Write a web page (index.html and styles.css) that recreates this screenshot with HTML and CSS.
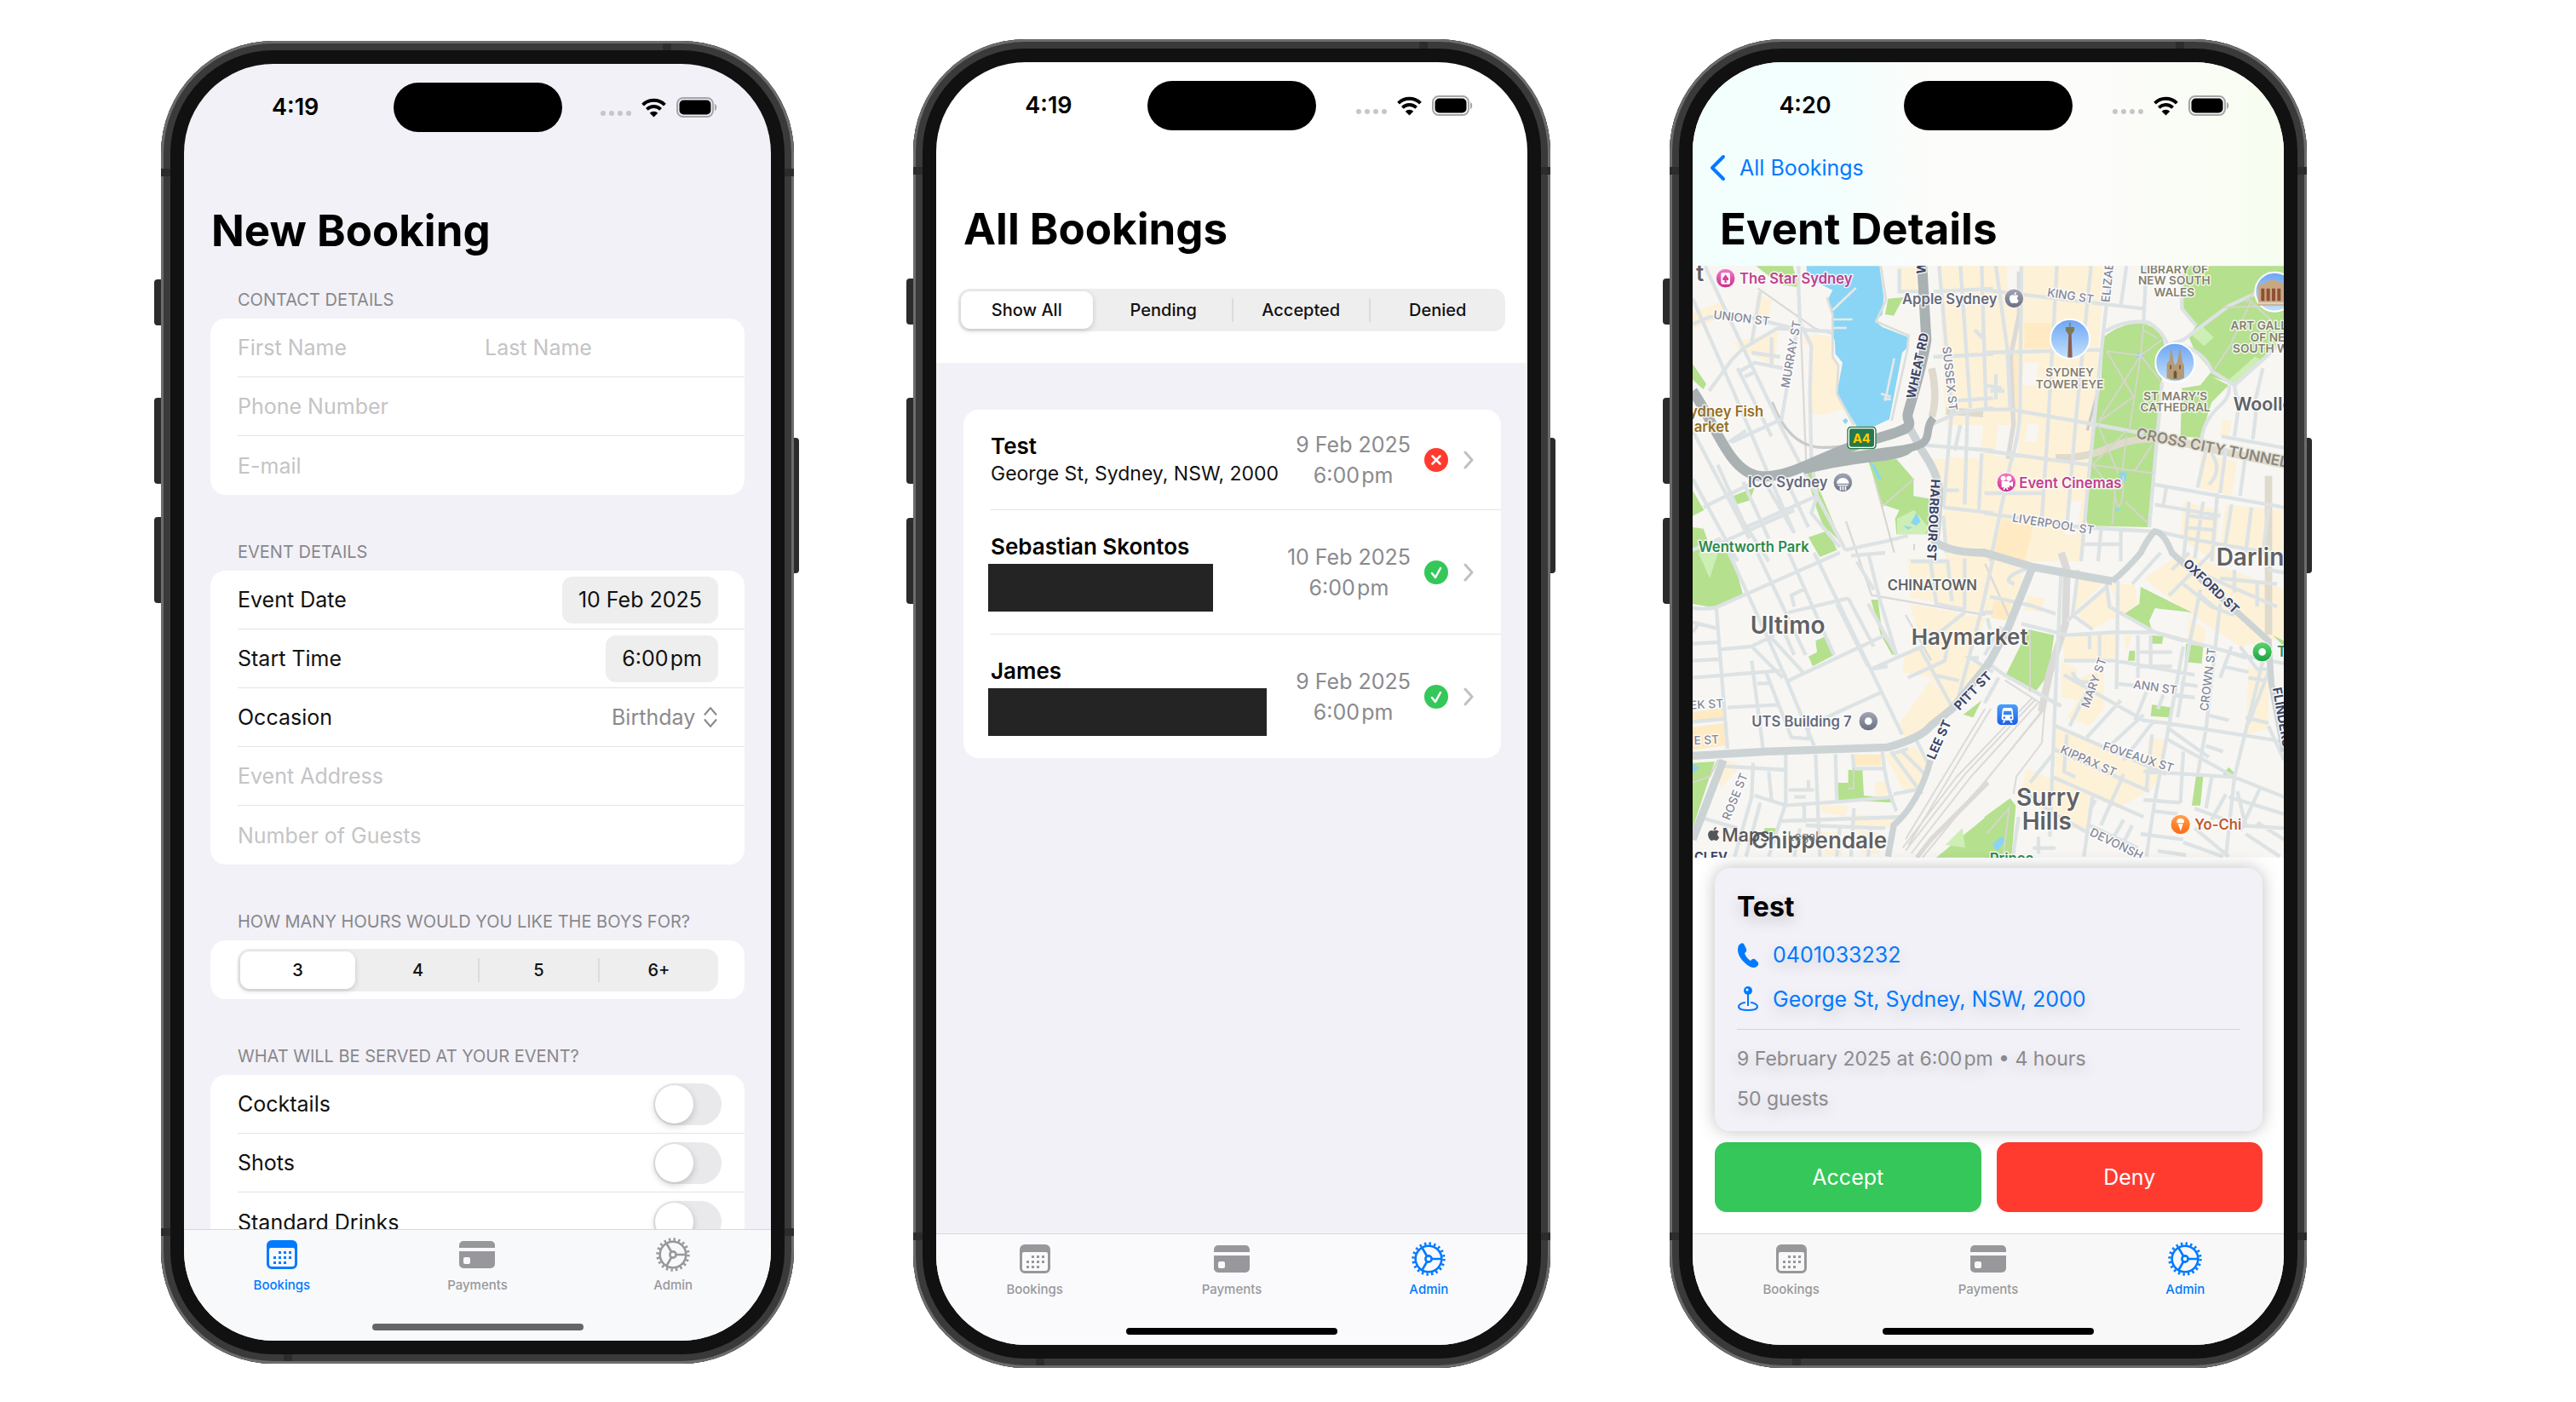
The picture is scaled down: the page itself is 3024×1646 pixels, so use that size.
FILE: index.html
```html
<!DOCTYPE html>
<html lang="en">
<head>
<meta charset="utf-8">
<title>Bookings app</title>
<meta name="viewport" content="width=device-width, initial-scale=1">
<link rel="stylesheet" href="styles.css">
</head>
<body>
<svg class="sprite" aria-hidden="true">
  <symbol id="i-calendar" viewBox="0 0 40 40">
    <path fill="currentColor" fill-rule="evenodd" d="M8 3h24a6 6 0 0 1 6 6v22a6 6 0 0 1-6 6H8a6 6 0 0 1-6-6V9a6 6 0 0 1 6-6zM7 12a2 2 0 0 0-2 2v17a3 3 0 0 0 3 3h24a3 3 0 0 0 3-3V14a2 2 0 0 0-2-2z"/>
    <g fill="currentColor"><path d="M16 16h3v3h-3zM22 16h3v3h-3zM28 16h3v3h-3zM10 22h3v3h-3zM16 22h3v3h-3zM22 22h3v3h-3zM28 22h3v3h-3zM10 28h3v3h-3zM16 28h3v3h-3zM22 28h3v3h-3z"/></g>
  </symbol>
  <symbol id="i-card" viewBox="0 0 44 40">
    <path fill="currentColor" d="M1 12V9a5 5 0 0 1 5-5h32a5 5 0 0 1 5 5v3z"/>
    <path fill="currentColor" fill-rule="evenodd" d="M1 16h42v15a5 5 0 0 1-5 5H6a5 5 0 0 1-5-5zM8 23a2 2 0 0 0-2 2v4a2 2 0 0 0 2 2h4a2 2 0 0 0 2-2v-4a2 2 0 0 0-2-2z"/>
  </symbol>
  <symbol id="i-gear" viewBox="0 0 40 40">
    <g fill="none" stroke="currentColor" stroke-width="2.6">
      <circle cx="20" cy="20" r="15.3"/>
      <circle cx="20" cy="20" r="18" stroke-width="3.4" stroke-dasharray="2.4 3.255"/>
      <circle cx="20" cy="20" r="3.6"/>
      <path d="M24 20h11M18 16.500l-5.500-9.500M18 23.500l-5.500 9.500"/>
    </g>
  </symbol>
  <symbol id="i-wifi" viewBox="0 0 32 24">
    <g fill="none" stroke="#000" stroke-width="4"><path d="M2.500 8.500a19 19 0 0 1 27 0M7.500 14a12 12 0 0 1 17 0"/></g>
    <path d="M16 23.500l-5-5a7 7 0 0 1 10 0z"/>
  </symbol>
  <symbol id="i-battery" viewBox="0 0 48 24">
    <rect x="1" y="1" width="42" height="22" rx="7" fill="none" stroke="#a5a5aa" stroke-width="2"/>
    <rect x="3.500" y="3.500" width="37" height="17" rx="5"/>
    <path d="M45 8c3 1 3 7 0 8z" fill="#a5a5aa"/>
  </symbol>
  <symbol id="i-chevron" viewBox="0 0 12 22"><path d="M2 2l8 9-8 9" fill="none" stroke="#c0c0c4" stroke-width="3" stroke-linecap="round" stroke-linejoin="round"/></symbol>
  <symbol id="i-yes" viewBox="0 0 28 28"><circle cx="14" cy="14" r="14" fill="#35c759"/><path d="M9 15l4 5 6-11" fill="none" stroke="#fff" stroke-width="2.500" stroke-linecap="round" stroke-linejoin="round"/></symbol>
  <symbol id="i-no" viewBox="0 0 28 28"><circle cx="14" cy="14" r="14" fill="#ff3b30"/><path d="M9.500 9.500l9 9M18.500 9.500l-9 9" fill="none" stroke="#fff" stroke-width="2.500" stroke-linecap="round"/></symbol>
  <symbol id="i-apple" viewBox="0 0 24 24"><path fill="currentColor" d="M12.152 6.896c-.948 0-2.415-1.078-3.96-1.04-2.04.027-3.91 1.183-4.961 3.014-2.117 3.675-.546 9.103 1.519 12.09 1.013 1.454 2.208 3.09 3.792 3.039 1.52-.065 2.09-.987 3.935-.987 1.831 0 2.35.987 3.96.948 1.637-.026 2.676-1.48 3.676-2.948 1.156-1.688 1.636-3.325 1.662-3.415-.039-.013-3.182-1.221-3.22-4.857-.026-3.04 2.48-4.494 2.597-4.559-1.429-2.09-3.623-2.324-4.39-2.376-2-.156-3.675 1.09-4.61 1.09zM15.53 3.83c.843-1.012 1.4-2.427 1.245-3.83-1.207.052-2.662.805-3.532 1.818-.78.896-1.454 2.338-1.273 3.714 1.338.104 2.715-.688 3.559-1.701"/></symbol>
</svg>

<main class="showcase">

  <section class="phone phone-first" aria-label="New booking">
    <span class="key key-action"></span><span class="key key-up"></span><span class="key key-down"></span><span class="key key-side"></span>
    <span class="seam seam-top"></span><span class="seam seam-bottom"></span><span class="seam seam-upper"></span><span class="seam seam-lower"></span>
    <div class="screen screen-grey">
      <header class="head">
        <div class="status"><span class="time">4:19</span><span class="island"></span><span class="signals"><span class="dots"><i></i><i></i><i></i><i></i></span><svg class="wifi"><use href="#i-wifi"/></svg><svg class="battery"><use href="#i-battery"/></svg></span></div>
        <div class="nav"></div>
        <h1>New Booking</h1>
      </header>
      <form class="form">
        <h2 class="group-title">CONTACT DETAILS</h2>
        <div class="group">
          <div class="row"><input type="text" placeholder="First Name" aria-label="First Name"><input type="text" placeholder="Last Name" aria-label="Last Name"></div>
          <div class="row"><input type="tel" placeholder="Phone Number" aria-label="Phone Number"></div>
          <div class="row"><input type="email" placeholder="E-mail" aria-label="E-mail"></div>
        </div>
        <h2 class="group-title">EVENT DETAILS</h2>
        <div class="group">
          <div class="row"><span>Event Date</span><button type="button" class="pill">10 Feb 2025</button></div>
          <div class="row"><span>Start Time</span><button type="button" class="pill">6:00&#8202;pm</button></div>
          <div class="row"><label for="occasion">Occasion</label><span class="picker"><select id="occasion"><option>Birthday</option></select><svg class="updown" viewBox="0 0 16 24"><path d="M2 9l6-7 6 7M2 15l6 7 6-7" fill="none" stroke="#8a8a8e" stroke-width="2" stroke-linecap="round" stroke-linejoin="round"/></svg></span></div>
          <div class="row"><input type="text" placeholder="Event Address" aria-label="Event Address"></div>
          <div class="row"><input type="text" placeholder="Number of Guests" aria-label="Number of Guests"></div>
        </div>
        <h2 class="group-title">HOW MANY HOURS WOULD YOU LIKE THE BOYS FOR?</h2>
        <div class="group">
          <div class="row"><div class="segments">
            <label><input type="radio" name="hours" checked><span>3</span></label>
            <label><input type="radio" name="hours"><span>4</span></label>
            <label><input type="radio" name="hours"><span>5</span></label>
            <label><input type="radio" name="hours"><span>6+</span></label>
          </div></div>
        </div>
        <h2 class="group-title">WHAT WILL BE SERVED AT YOUR EVENT?</h2>
        <div class="group">
          <div class="row row-toggle"><label for="cocktails">Cocktails</label><input class="toggle" type="checkbox" id="cocktails"></div>
          <div class="row row-toggle"><label for="shots">Shots</label><input class="toggle" type="checkbox" id="shots"></div>
          <div class="row row-toggle"><label for="standard">Standard Drinks</label><input class="toggle" type="checkbox" id="standard"></div>
        </div>
      </form>
      <footer class="tabbar tabbar-tinted">
        <nav class="tabs">
          <a class="on" href="#bookings"><svg class="icon"><use href="#i-calendar"/></svg>Bookings</a>
          <a href="#payments"><svg class="icon icon-wide"><use href="#i-card"/></svg>Payments</a>
          <a href="#admin"><svg class="icon"><use href="#i-gear"/></svg>Admin</a>
        </nav>
        <span class="home home-soft"></span>
      </footer>
    </div>
  </section>

  <section class="phone" aria-label="All bookings">
    <span class="key key-action"></span><span class="key key-up"></span><span class="key key-down"></span><span class="key key-side"></span>
    <span class="seam seam-top"></span><span class="seam seam-bottom"></span><span class="seam seam-upper"></span><span class="seam seam-lower"></span>
    <div class="screen">
      <header class="head">
        <div class="status"><span class="time">4:19</span><span class="island"></span><span class="signals"><span class="dots"><i></i><i></i><i></i><i></i></span><svg class="wifi"><use href="#i-wifi"/></svg><svg class="battery"><use href="#i-battery"/></svg></span></div>
        <div class="nav"></div>
        <h1>All Bookings</h1>
      </header>
      <div class="filter">
        <div class="segments">
          <label><input type="radio" name="filter" checked><span>Show All</span></label>
          <label><input type="radio" name="filter"><span>Pending</span></label>
          <label><input type="radio" name="filter"><span>Accepted</span></label>
          <label><input type="radio" name="filter"><span>Denied</span></label>
        </div>
      </div>
      <div class="list">
        <div class="group">
          <a class="booking" href="#test"><span class="who"><b>Test</b><span class="place">George St, Sydney, NSW, 2000</span></span><span class="when">9 Feb 2025<br>6:00&#8202;pm</span><svg class="mark"><use href="#i-no"/></svg><svg class="chevron"><use href="#i-chevron"/></svg></a>
          <a class="booking" href="#sebastian"><span class="who"><b>Sebastian Skontos</b><span class="redacted"></span></span><span class="when">10 Feb 2025<br>6:00&#8202;pm</span><svg class="mark"><use href="#i-yes"/></svg><svg class="chevron"><use href="#i-chevron"/></svg></a>
          <a class="booking" href="#james"><span class="who"><b>James</b><span class="redacted redacted-long"></span></span><span class="when">9 Feb 2025<br>6:00&#8202;pm</span><svg class="mark"><use href="#i-yes"/></svg><svg class="chevron"><use href="#i-chevron"/></svg></a>
        </div>
      </div>
      <footer class="tabbar">
        <nav class="tabs">
          <a href="#bookings"><svg class="icon"><use href="#i-calendar"/></svg>Bookings</a>
          <a href="#payments"><svg class="icon icon-wide"><use href="#i-card"/></svg>Payments</a>
          <a class="on" href="#admin"><svg class="icon"><use href="#i-gear"/></svg>Admin</a>
        </nav>
        <span class="home"></span>
      </footer>
    </div>
  </section>

  <section class="phone" aria-label="Event details">
    <span class="key key-action"></span><span class="key key-up"></span><span class="key key-down"></span><span class="key key-side"></span>
    <span class="seam seam-top"></span><span class="seam seam-bottom"></span><span class="seam seam-upper"></span><span class="seam seam-lower"></span>
    <div class="screen">
      <header class="head head-tinted">
        <div class="status"><span class="time">4:20</span><span class="island"></span><span class="signals"><span class="dots"><i></i><i></i><i></i><i></i></span><svg class="wifi"><use href="#i-wifi"/></svg><svg class="battery"><use href="#i-battery"/></svg></span></div>
        <div class="nav"><a class="back" href="#all"><svg class="back-arrow" viewBox="0 0 20 32"><path d="M17 3L4 16l13 13" fill="none" stroke="#007aff" stroke-width="4" stroke-linecap="round" stroke-linejoin="round"/></svg>All Bookings</a></div>
        <h1>Event Details</h1>
      </header>

      <svg class="map" viewBox="0 0 2082 2084" role="img" aria-label="Map of Haymarket, Sydney">
        <defs>
          <linearGradient id="sky" x2="0" y2="1"><stop stop-color="#6da5f5"/><stop offset="1" stop-color="#c4e2fb"/></linearGradient>
          <linearGradient id="pink" x2="0" y2="1"><stop stop-color="#f47ccb"/><stop offset="1" stop-color="#c92b88"/></linearGradient>
          <linearGradient id="slate" x2="0" y2="1"><stop stop-color="#a3a7b5"/><stop offset="1" stop-color="#6a6d80"/></linearGradient>
          <linearGradient id="blue" x2="0" y2="1"><stop stop-color="#4aa2fb"/><stop offset="1" stop-color="#1c5fe4"/></linearGradient>
          <linearGradient id="green" x2="0" y2="1"><stop stop-color="#5cd56f"/><stop offset="1" stop-color="#1ba243"/></linearGradient>
          <linearGradient id="orange" x2="0" y2="1"><stop stop-color="#ffa24d"/><stop offset="1" stop-color="#f96a12"/></linearGradient>
        </defs>
        <rect width="2082" height="2084" fill="#f7f6f3"/>

        <!-- city blocks -->
        <g fill="#fdf1d8">
          <g transform="translate(-22 -39)">
            <path d="M24 200l106-35v55l-106 40zM250 140l50 20-10 85-60-5zM165 310l160-40-15 120-130-60zM400 300l50-20 60 10v70l30 40-10 90 30 50-80 25-40-5-5-230zM742 45h70v80l-60 5zM890 40h190v1040H915l-10-190-5-100-50-70h80l-20-170z"/>
          </g>
          <g transform="translate(1028 -39)">
            <path d="M0 40h420l-35 560-25 320-20 160H0zM760 700l130 30-20 120-120-30zM840 580l30 5-10 60-30-10zM700 870l130 30-20 180-120-80zM850 880l200 20v160l-220-30z"/>
          </g>
          <g transform="translate(-22 1011)">
            <path d="M780 20h300l-40 190-60-10-110-30-80-10zM785 180l270 50-65 150 50 20-80 140h-30l-70-100-100 -20 10-60 60-30zM750 600l110-150 80 90-80 80-90 30zM700 710l100-30 50 50-30 120-60-20zM470 890l100 0-10 40-80-15zM590 920l150 15-20 35-140-10zM470 985h60l20 80h-60zM600 975l90 15-10 70h-60zM120 730l60 10-5 30-55 60zM665 810l40-5 10 45-50 10z"/>
          </g>
          <g transform="translate(1028 1011)">
            <path d="M0 0l140 30-30 210L0 220zM150 150l60 10-10 50-60-10zM275 300l195-20-10 90-180 10zM270 380l60 30-10 40 100-50v150l-50 60-80-30 40-60-60-10zM440 110h90l10 70-60 40zM560 90L700 0l355 130v170l-155 30-200-130zM320 210l110-80 40 90-90 50zM330 80l100 15-110 110zM250 610l390 150-50 70-120 70-220-90zM930 400l70 20v200l-80 20zM150 760l220 100-10 120-110-20-120-130zM580 650l60 10-20 140-60-10zM720 230l60 40-10 80-60-20zM520 290l-20 60 -10-60z"/>
          </g>
        </g>
        <g fill="#ffeac4">
          <path d="M1168 201h100v90h-100zM1110 300h35v200h-25zM1090 892l110 20-35 150-120-30zM0 1571l113-15 5 38-118 18zM0 1625l118-15 5 80-123 15zM568 1721h95v40h-95zM1060 1180l60 10-10 60-60-10z"/>
        </g>
        <g fill="#f7f6f3">
          <path d="M893 561h130l-10 120-120-10zM1108 1h40v80h-40zM1168 341l50 0-10 80-50 0zM1075 561h80l-10 110h-80zM930 90h30l10 60h-40zM1325 830l45 0-20 120-40-5zM1180 555l40 5-10 60-40 0z"/>
        </g>

        <!-- parks -->
        <g fill="#b5e08e">
          <path transform="translate(-22 -39)" d="M245 40h130l20 75-65-10zM710 155l55-5-35 65-30-5zM22 385l48 70-10 20-38-35zM640 725l100-5 60 70v60l60 10-10 125H740l-5-55 15-30-60-20zM165 850l75-30-15 45-50 15zM420 765l20-5 110 260-50-50 30 70-60 25-40-70 60-20-30-75zM22 960l38 5 20 55-58 60zM22 830l40 70-40 20z"/>
          <path transform="translate(1028 -39)" d="M420 290q60-50 140-50l60 30 20 70-20 130-10 170-10 140-20 180-215-5-10-35 30-330 25-140zM700 40h355v250l-75 80-120 80-60-20 60 30-60 60-40 125-70-5 5-170 65-10 40-50-60-70-20-50 25-40-50-60z"/>
          <path transform="translate(-22 1011)" d="M22 0h138l40 150-90 45-88-15zM650 165h25l15 125 50 65-15 5-40-70zM455 310l35-15 30 65-75 40-15-35 30-15zM530 810h40v-45h50l5 90 105 10-5 15-190-10zM22 740l78-5-78 235zM975 570l65-50-30 60zM880 1073l200-163v163zM275 970h40v20h-40z"/>
          <path transform="translate(1028 1011)" d="M550 120l180 90-130-15-20 45 10 35-105-55 60-40zM155 270l90 20-20 140-50 65-100-65zM590 290l40 5-5 25h-40zM510 345h20v35h-25zM710 320l60 10-5 60-60-5zM590 535l70 10-5 35-70-5zM745 785l25 5-10 100h-30zM840 780l20-25 25 25-15 10zM0 930l90-65 20 25-15 183H0zM1015 290l40 20v20z"/>
        </g>
        <g fill="#cdeeb4">
          <path d="M1760 245l35-32 40 40-35 30zM720 890l60-30 50 60-10 25h-100zM1890 400l90-80 20 10-90 90zM20 1011h70l-30 90zM890 2040l60-60 10 70z"/>
        </g>

        <!-- water -->
        <g fill="#8ad5f5">
          <path transform="translate(-22 -39)" d="M423 40h257l15 110-5 60-25 25 25 20 90 35-5 40-15 15-45 235-55 25h-60l-70-115 20-110-25-30-3-50-10-10 3-75-18-55 18-35-90-45zM550 585l10-10 10 10-10 12zM645 725l20 20 25 50-15-5zM790 945l20-35 15 30-15 15zM765 955l30 5-15 8z"/>
          <circle cx="1575" cy="317" r="12"/>
          <path d="M1505 727l25 2-5 30-20 10zM1487 852l22 8-18 6zM0 1755l25 12-25 18zM1055 2040l30-30 18 12-30 40z"/>
        </g>
        <g fill="none" stroke="#e6e9e6" stroke-width="8" transform="translate(-22 -39)"><path d="M515 195l82-78M515 228h70M515 258h50M732 365l-32 150M685 490l35 10M695 505l25 5"/><path stroke="#dcdedb" d="M685 40l18 120-35 75 115 50-5 50-55 250M495 150l20 60v150l20 30-5 100 60 110"/></g>

        <!-- tunnels and rail -->
        <g fill="none" stroke="#dfdacc" stroke-width="26">
          <path d="M843 531q20-70-1-170M1278 676q100 5 190-35t200-30l415 90M893 511l130 10M2028 740v560"/>
        </g>
        <g fill="none" stroke="#dcdad8">
          <path stroke-width="26" d="M1298 1011l20 60-5 190-55 170-30 140"/>
          <path stroke-width="6" d="M1228 1570l-200 250-240 264M1240 1560l-230 280-200 244M1216 1540L980 1800 770 2070M1205 1530L960 1790 750 2060M1198 1520L930 1800 740 2050M1100 1460l140 90-10 130-90 120-10 60M1050 1560L760 2040M1030 1560L750 2020"/>
          <path stroke-width="16" d="M1040 1820L840 2020l-50 64M1150 20v150l-30 150 10 240-20 120"/>
          <path stroke-width="7" d="M230 80l200 140 60 20M380 200l20 500M540 900l90 260 400 70M840 1390l-90-160M1030 1050l90 200"/>
        </g>
        <path d="M1430 430l-40 150M280 480q60 160 180 160t320-60" fill="none" stroke="#c9cacb" stroke-width="10"/>

        <!-- local streets -->
        <g fill="none" stroke="#dde3e4" stroke-width="13">
          <path transform="translate(-22 -39)" d="M65 40l155 330 120 250 120 230M22 155l143 325 135 320 80 180M22 245l58-25 120-5 180 45M260 130l-30 180M395 40v80l5 120 40 80-5 160 5 240 20 130 100 190M80 480l80-110 40-40 120-70 190 10M390 260l-55 320-175 80M22 790l158 290M60 890l160-80M110 740l90 200 90 140M200 800l90 200M270 790l110 190M340 770l90 190M210 960l250-110M110 1020l270-120M180 400l120 240M190 410l50-30 100 20M205 430l40-18M300 290v110M230 345l100 15M870 130l210-10M890 40l45 505-30 345M965 40l35 500M1040 40l15 500M870 360l210-10M940 515l140-10M860 600l100-45 120-15M830 670l250 20M905 890l175 20M900 830h60M1015 265l30 30v-30M965 600l-20 90M990 560l-10 320M1040 700l-10 200M905 920l10 130M750 50v80h80M22 620l200 380M460 850l-20 60 100 120M560 1040l140-30 80-20M580 1060l120-10M150 660l60-40M22 1040l100-40"/>
          <path transform="translate(1028 -39)" d="M0 125l560 65M0 345l415-10M0 545h90l310 55 160 30M0 690l365 50M0 910l340 50 260 15M255 40l-30 540-25 380M375 40l-55 560-30 360M445 40l-35 310-40 400-30 330M560 240l10-200M500 40l-20 140M640 320l60-20 160-120 195-90M425 270q75-45 155-30 50 30 70 90M700 320q80 30 100 90l80 50 100-90 75-70M695 60v130l50 60M860 460q10 40-40 80-50 50-55 110l35 30M625 450l-45 510M600 810l455 80M780 690l-30 130M850 680l-20 160M920 700l-20 150M600 880l230 40M720 870l-20 210M770 870l-30 200M820 840l-20 240M590 970l130 30 335 60M40 40l40 290 10 210M130 40l-5 510q-5 100-35 190l-70 340M880 460l10 60 160 20M835 640l220 40M900 500l-20 140M960 520l-15 130M980 400l-30 130M870 880l-25 160M940 890l-20 160M1000 890l-20 170M720 920l90 10M710 960l95 10M800 700q40 60-10 110M40 420v90M0 460l60 10M20 480h50M640 820l-10 60M640 700h0M410 970l-10 110M480 970v110M340 1020h140M0 840l210 0"/>
          <path transform="translate(-22 1011)" d="M150 0l200 440 100 240M250 0l170 360M360 0l160 360M450 0l310 640M22 195q58 5 88-5L540 0M360 450l340-160M360 210l210-50M470 590l220-100M105 190l40 500M22 245l83 20M22 320l93-5M22 380l93-5M22 440l308-25M120 340l110-10 80-40M230 330l110 110M230 380l40 310M145 545l185-10M250 460h50M280 420l90 230 60 5v-80M300 300l110 120M340 270l40 90M380 190l-10-40 50-25M640 0l40 160 60 200M600 30l60 100M650 410l180-80 150-120M650 410l60-10M820 330l120 220M780 440l130-60 20-100M870 430l90 20M950 540l90-340 40-180M1030 370l-30 0 80 50M980 20v180M790 30l130 0 15 140M860 30l20 150 100 20M1040 210h40M530 180l110 220M570 160l90 170M22 595l115-10M640 180l100 180M110 750l240 15M235 740l-5 120-60 210M290 770l10 100M350 710v170l-60 190M455 710l15 360M525 710l5 165M240 855l110 35 210-15 170-15M330 945l430-15M420 960l280 10M60 935l120 35M585 710l5 50h110M690 700q10 120 50 210M720 700l110 150M760 700l80 80M720 710l60-20M360 835l90 0M430 800v40M380 860h40M415 890v60M590 900l-10 170M650 970l-10 100M540 970l-10 100M400 970l-20 100M22 280l20-30M730 850l100-20M640 590l0 0M810 660l40 80M260 880l-50 190"/>
          <path transform="translate(1028 1011)" d="M270 60l-25 550-15 390M330 60l-20 160M130 250l160 40 160-10h150l300 80 155 30M290 240l140-120M310 220l70 50 0 0M430 110l10 80 160 90 100 30M470 100l-5 380M280 380h180l280 50M280 430l280 160 80 10 415 65M250 610l390 170M240 690l340 150M640 655l240 135M405 280v100M370 280v60M540 290v150M585 290v120M700 330l-60 330-40 210-30 200M760 130l-40 200-40 250M830 180l-50 440-30 165M870 330l-40 110M650 150l90-90 60-60M520 110L620 0M540 350h120M540 400h120M460 460l90 10M570 490l-40 100M630 500l-20 50M980 380L880 790l-30 280M560 770l320 20 175 70M240 790l320 140M700 700l-10 180M300 610l90-180M360 650l120-130M430 690l130-120M490 730l100-130M410 960l80-180M380 860l-30 210M370 960l170 80M550 990l150 20M600 910l80 10M560 870l130 10M740 900l160 60 155 10M800 790l-20 110M610 1050l100 15M860 860l195 60M970 830l-70 150M900 330l60 80 40 0M840 400l90 20M860 350l60 20M690 460l60 10M670 500l70 10M780 570l80 20M1000 60l55 10M700 110l100 80 80 30M730 60l300 130M760 150l60 50M830 90l200 20M960 110v80M880 60v80M1000 420l-70 180M930 440l60 10M920 580l80 20M1000 610l55 120M20 155l140 30 90 30M165 50q-120 40-60 60M10 230l10 40M0 360l60-100M0 380l70 50 200 110M50 440L0 530M660 60l60-60M740 970l120 100M700 1020l140 50M920 990l120 80M960 950l95 60M890 840l30 120M850 850l-50 90M310 420q20 60 90 20M290 640l-10 130 40 20M160 810l80-100M130 830l100 80 140 80M170 1040h80M190 1000v60M100 1070l20-140M520 960l-40 80M490 940l-40 70M780 680l60 20M650 620l140 100M590 640l-20 190M390 870l-20 40"/>
        </g>

        <!-- park footpaths -->
        <g fill="none" stroke="#d5d6cb" stroke-width="6" transform="translate(1028 -39)">
          <path d="M430 340l120 15 75-55M550 355l10-110M550 355L400 590M430 340l95 160-125 90M550 355l70 90M550 350l-40 270M560 265l50 30M500 620L380 740l215 30M400 600l70 170M590 670l-60 90M500 640l-15 120M460 790l-2 50q15 90 30 0l0-60M458 850l-8 100M495 870l80 75M380 740l70 90M805 410l60-90 75-160M840 185l215-5M920 150l90 80M160 1320l0 220M1000 60l-80 110"/>
        </g>
        <g fill="none" stroke="#d5d6cb" stroke-width="6"><path d="M665 850l115-100M640 750l70 260M780 1001l0-20M545 1841h22v-70M0 1820l60-20 30-60M1035 2000l80-90-20 160"/></g>

        <!-- main roads -->
        <g fill="none" stroke="#ccd3d4">
          <g stroke-width="28"><path d="M753 551l55 100q55 80 60 140-5 130-15 180 50 40 175 40l170 50 280 50M0 1726l258-15 430-15q120-35 150-75l75-60 130-160 70-130 80-200M108 1741L0 2021"/></g>
          <g stroke-width="22"><path d="M838 1741q-40 150-130 230l-20 110M1478 1111q50-40 100-100 30-60 50-75 30 0 60 75l340 310 10 150 45 240"/></g>
        </g>
        <g fill="none" stroke="#a9b1b2" stroke-width="36">
          <path d="M0 441c78 110 128 290 238 300s220-80 400-130 110-50 120-90 50-160 65-260L808 0"/>
          <path stroke-width="28" d="M398 706c130-45 280-45 370-65s40-60 80-105M390 720q150-35 260-45t120-40"/>
        </g>

        <!-- street names -->
        <g class="street">
          <text transform="translate(72 186) rotate(7)">UNION ST</text>
          <text transform="translate(340 432) rotate(-80)">MURRAY ST</text>
          <text transform="translate(880 286) rotate(84)">SUSSEX ST</text>
          <text transform="translate(1247 107) rotate(9)">KING ST</text>
          <text transform="translate(1468 130) rotate(-84)">ELIZAB</text>
          <text transform="translate(1124 901) rotate(9)">LIVERPOOL ST</text>
          <text transform="translate(-8 1562) rotate(-3)">EK ST</text>
          <text transform="translate(5 1687) rotate(-3)">E ST</text>
          <text transform="translate(130 1955) rotate(-68)">ROSE ST</text>
          <text transform="translate(1395 1560) rotate(-70)">MARY ST</text>
          <text transform="translate(1550 1488) rotate(8)">ANN ST</text>
          <text transform="translate(1815 1570) rotate(-83)">CROWN ST</text>
          <text transform="translate(1442 1704) rotate(18)">FOVEAUX ST</text>
          <text transform="translate(1292 1714) rotate(24)">KIPPAX ST</text>
          <text transform="translate(1396 2005) rotate(26)">DEVONSH</text>
        </g>
        <g class="street street-main">
          <text transform="translate(783 470) rotate(-78)">WHEAT RD</text>
          <text transform="translate(820 30) rotate(-86)">W</text>
          <text transform="translate(840 751) rotate(93)">HARBOUR ST</text>
          <text transform="translate(940 1568) rotate(-46)">PITT ST</text>
          <text transform="translate(852 1742) rotate(-66)">LEE ST</text>
          <text transform="translate(1725 1052) rotate(44)">OXFORD ST</text>
          <text transform="translate(2042 1488) rotate(80)">FLINDERS</text>
          <text x="6" y="2098">CLEV</text>
        </g>
        <text class="tunnel" transform="translate(1560 607) rotate(11)">CROSS CITY TUNNEL</text>

        <!-- places -->
        <g class="area">
          <text x="12" y="55">t</text>
          <text class="area-large" x="203" y="1295">Ultimo</text>
          <text x="770" y="1335">Haymarket</text>
          <text x="208" y="2051">Chippendale</text>
          <text class="area-large" x="1140" y="1901">Surry</text>
          <text class="area-large" x="1160" y="1987">Hills</text>
          <text class="area-small" x="1904" y="511">Woolloo</text>
          <text class="area-large" x="1844" y="1056">Darlinghurst</text>
        </g>
        <text class="place-small" x="686" y="1143">CHINATOWN</text>
        <g class="sight" text-anchor="middle">
          <text x="1696" y="26">LIBRARY OF</text><text x="1696" y="66">NEW SOUTH</text><text x="1696" y="107">WALES</text>
          <text x="1328" y="390">SYDNEY</text><text x="1328" y="431">TOWER EYE</text>
          <text x="1700" y="473">ST MARY’S</text><text x="1700" y="514">CATHEDRAL</text>
          <text x="2034" y="225">ART GALLERY</text><text x="2046" y="266">OF NEW</text><text x="2052" y="307">SOUTH WALES</text>
        </g>
        <g class="poi">
          <text x="165" y="62" fill="#c2408f">The Star Sydney</text>
          <text x="738" y="134" fill="#666a7c">Apple Sydney</text>
          <text x="-12" y="531" fill="#96701f">ydney Fish</text><text x="5" y="585" fill="#96701f">arket</text>
          <text x="195" y="781" fill="#666a7c">ICC Sydney</text>
          <text x="20" y="1008" fill="#2c8a4b">Wentworth Park</text>
          <text x="1150" y="783" fill="#c2408f">Event Cinemas</text>
          <text x="208" y="1623" fill="#666a7c">UTS Building 7</text>
          <text x="1768" y="1987" fill="#c05a2b">Yo-Chi</text>
          <text x="2058" y="1377" fill="#2c8a4b">Taylor</text>
          <text x="1046" y="2106" fill="#2c8a4b">Prince</text>
        </g>

        <!-- map pins -->
        <g stroke="#fff" stroke-width="3">
          <circle cx="116" cy="44" r="34" fill="url(#pink)"/><circle cx="1132" cy="115" r="34" fill="url(#slate)"/><circle cx="529" cy="763" r="34" fill="url(#slate)"/>
          <circle cx="1105" cy="763" r="34" fill="url(#pink)"/><circle cx="619" cy="1604" r="34" fill="url(#slate)"/><circle cx="2006" cy="1360" r="35" fill="url(#green)"/><circle cx="1718" cy="1968" r="35" fill="url(#orange)"/>
          <rect x="1071" y="1543" width="76" height="76" rx="16" fill="url(#blue)"/>
        </g>
        <g fill="#fff">
          <rect x="100" y="25" width="32" height="40" rx="5"/><path fill="#d83f9b" d="M116 31l11 15q0 8-9 5l3 8h-10l3-8q-9 3-9-5z"/>
          <circle cx="619" cy="1604" r="13"/><circle cx="2006" cy="1360" r="13"/>
          <path d="M507 767a22 20 0 0 1 44 0zM510 771h38v4h-38zM518 777h5v14h-5zM527 777h5v14h-5zM536 777h5v14h-5z"/>
          <circle cx="1094" cy="749" r="9"/><circle cx="1114" cy="749" r="9"/><path d="M1088 759h28v6l12-6v20l-12-6v8h-8l4 8h-5l-4-8-5 8h-5l4-8h-9z"/>
          <path d="M1705 1958a13 12 0 0 1 26 0q0 6-6 5h-14q-6 1-6-5zM1709 1966h18l-8 25z"/>
          <path fill-rule="evenodd" d="M1098 1557h22q6 0 7 7l3 29q0 8-7 8h-28q-7 0-7-8l3-29q1-7 7-7zM1096 1568l-2 14h30l-2-14zM1097 1588a4 4 0 1 0 1 0zM1121 1588a4 4 0 1 0 1 0zM1096 1602h6l-5 8h-6zM1116 1602h6l5 8h-6z"/>
        </g>
        <svg x="1112" y="93" width="40" height="40" color="#fff"><use href="#i-apple"/></svg>
        <g stroke="#fff" stroke-width="6" fill="url(#sky)"><circle cx="1329" cy="257" r="69"/><circle cx="1699" cy="341" r="69"/><circle cx="2050" cy="92" r="69"/></g>
        <path d="M1324 240h10l3 83h-16z" fill="#8c5d50"/><path d="M1314 216h30v12l-8 12h-14l-8-12zM1327 200h4v16h-4z" fill="#7b7a52"/>
        <path d="M1670 395v-50l8-10 8-50 8 55 5 10 8-10 9-55 9 55 6 12v43q-30 16-61 0z" fill="#b59a75"/><path d="M1681 350h5v14h-5zM1714 350h5v14h-5zM1694 375q5-12 11 0v22h-11z" fill="#6e553c"/>
        <path d="M1992 70l50-22 60 22v70h-110z" fill="#c8a883"/><g fill="#914f34"><path d="M2002 80h12v44h-12zM2021 80h12v44h-12zM2040 80h12v44h-12zM2059 80h12v44h-12z"/></g><path d="M1992 128h90v8h-90z" fill="#ddd1c0"/>

        <!-- route shield -->
        <rect x="544" y="566" width="103" height="80" rx="13" fill="#26784a"/><rect x="550" y="572" width="91" height="68" rx="9" fill="none" stroke="#fff" stroke-width="4"/>
        <text class="shield" x="595" y="623" text-anchor="middle">A4</text>

        <svg x="50" y="1973" width="48" height="56" color="#55565a"><use href="#i-apple"/></svg>
        <text class="credit" x="103" y="2029">Maps</text>
        <text class="legal" x="335" y="2024">Legal</text>
      </svg>

      <article class="event">
        <h2>Test</h2>
        <a class="contact" href="tel:0401033232"><svg class="contact-icon" viewBox="0 0 26 30"><path fill="#007aff" d="M2 4q3-4 6-2l3 6q1 3-2 5 2 6 7 9 2-3 5-2l4 4q1 3-2 5-5 3-12-3Q-2 15 2 4z"/></svg>0401033232</a>
        <a class="contact" href="#map"><svg class="contact-icon" viewBox="0 0 26 30"><circle cx="13" cy="5" r="5" fill="#007aff"/><circle cx="12" cy="4" r="1.500" fill="#fff"/><path d="M13 9v14" stroke="#007aff" stroke-width="2"/><path d="M9 19C-1 21-1 28 13 28s14-7 4-9" fill="none" stroke="#007aff" stroke-width="2.200" stroke-linecap="round"/></svg>George St, Sydney, NSW, 2000</a>
        <hr>
        <p>9 February 2025 at 6:00&#8202;pm • 4 hours</p>
        <p>50 guests</p>
      </article>
      <div class="actions"><button type="button" class="accept">Accept</button><button type="button" class="deny">Deny</button></div>

      <footer class="tabbar tabbar-plain">
        <nav class="tabs">
          <a href="#bookings"><svg class="icon"><use href="#i-calendar"/></svg>Bookings</a>
          <a href="#payments"><svg class="icon icon-wide"><use href="#i-card"/></svg>Payments</a>
          <a class="on" href="#admin"><svg class="icon"><use href="#i-gear"/></svg>Admin</a>
        </nav>
        <span class="home"></span>
      </footer>
    </div>
  </section>
</main>
</body>
</html>
```
FILE: styles.css
```css
* { box-sizing: border-box; }

body {
  margin: 0;
  background: #fff;
  color: #111;
  font-family: Inter, "Liberation Sans", sans-serif;
  font-size: 25px;
  line-height: 32px;
}

h1, h2, p { margin: 0; }
a { color: inherit; text-decoration: none; }
button, input, select { font: inherit; color: inherit; border: 0; background: none; margin: 0; padding: 0; }
.sprite { position: absolute; width: 0; height: 0; }

.showcase {
  display: grid;
  grid-template-columns: 743fr 748fr 748fr;
  align-items: center;
  gap: 140px;
  padding: 46px 316px 36px 189px;
}

/* device frame */
.phone {
  position: relative;
  aspect-ratio: 748 / 1560;
  min-width: 0;
  padding: 27px;
  border-radius: 132px;
  background: #111;
  box-shadow: inset 0 0 0 3px #6c6c6c, inset 0 0 0 11px #3a3a3a;
}
.phone-first { aspect-ratio: 743 / 1553; margin-bottom: 3px; }

.key { position: absolute; left: -8px; width: 8px; background: #2b2b2b; border-radius: 4px 0 0 4px; }
.key-action { top: 18%; height: 54px; }
.key-up { top: 27%; height: 101px; }
.key-down { top: 36%; height: 101px; }
.key-side { left: auto; right: -6px; top: 30%; width: 6px; height: 159px; border-radius: 0 4px 4px 0; }

.seam { position: absolute; background: #2c2c2c; }
.seam-top { top: 3px; right: 144px; width: 10px; height: 8px; }
.seam-bottom { bottom: 3px; left: 144px; width: 10px; height: 8px; }
.seam-upper, .seam-lower { left: 0; right: 0; height: 9px; background: linear-gradient(90deg, #2c2c2c 11px, transparent 11px calc(100% - 11px), #2c2c2c calc(100% - 11px)); }
.seam-upper { top: 150px; }
.seam-lower { bottom: 150px; }

.screen {
  display: flex;
  flex-direction: column;
  height: 100%;
  overflow: hidden;
  border-radius: 105px;
  background: #fff;
}
.screen-grey { background: #f2f1f7; }

/* status bar and title */
.head { flex: none; padding: 22px 0 5px; }
.head-tinted { background: linear-gradient(90deg, #f3fffd 0, #f2fffe 22%, #fcfcfa 40%, #fcfcfa 70%, #f7fdf0 100%); }
.status { display: grid; grid-template-columns: 1fr 198px 1fr; align-items: center; height: 58px; }
.time { padding-left: 16px; text-align: center; font-weight: 600; font-size: 27px; color: #000; }
.island { height: 58px; border-radius: 29px; background: #000; }
.signals { display: flex; align-items: center; justify-content: center; gap: 11px; padding-right: 18px; }
.dots { display: flex; gap: 4px; padding-top: 14px; }
.dots i { width: 6px; height: 6px; border-radius: 3px; background: #c6c6ca; }
.wifi { width: 31px; height: 23px; }
.battery { width: 48px; height: 24px; }
.nav { display: flex; align-items: center; height: 68px; margin-top: 10px; padding: 0 19px; }
.back { display: flex; align-items: center; gap: 16px; color: #007aff; }
.back-arrow { width: 20px; height: 32px; }
h1 { padding: 0 32px; font-size: 51px; line-height: 76px; font-weight: 700; color: #000; }

/* grouped rows */
.form { flex: 1; min-height: 0; overflow: hidden; padding: 0 31px; }
.group-title { padding: 0 32px 10px; margin-top: 55px; font-size: 20px; line-height: 24px; font-weight: 400; color: #88888c; white-space: nowrap; }
.group-title:first-child { margin-top: 26px; }
.group { padding-left: 32px; border-radius: 18px; background: #fff; }
.row { display: flex; align-items: center; justify-content: space-between; gap: 16px; height: 69px; padding-right: 31px; border-bottom: 1px solid #e4e4e6; }
.row:last-child { border-bottom: 0; }
.row input[placeholder] { flex: 1; min-width: 0; height: 48px; outline: 0; }
.row input::placeholder { color: #c4c4c6; opacity: 1; }
.pill { height: 55px; padding: 0 19px; border-radius: 12px; background: #eee; }
.picker { display: flex; align-items: center; gap: 8px; color: #8a8a8e; }
.picker select { appearance: none; }
.updown { width: 18px; height: 26px; }
.row-toggle { padding-right: 27px; }

.toggle { appearance: none; display: flex; width: 80px; height: 49px; padding: 2px; border-radius: 25px; background: #e9e9eb; }
.toggle::before { content: ""; width: 45px; height: 45px; border-radius: 50%; background: #fff; box-shadow: 0 3px 8px rgba(0, 0, 0, .2); }
.toggle:checked { background: #35c759; justify-content: flex-end; }

.segments { display: flex; flex: 1; height: 50px; padding: 3px 0; border-radius: 14px; background: #eee; font-size: 20px; font-weight: 500; }
.segments label { position: relative; display: flex; flex: 1; }
.segments input { position: absolute; opacity: 0; }
.segments span { display: flex; flex: 1; align-items: center; justify-content: center; margin: 0 3px; border-radius: 11px; }
.segments input:checked + span { background: #fff; box-shadow: 0 2px 6px rgba(0, 0, 0, .18); }
.segments label:nth-child(n+3)::before { content: ""; align-self: center; width: 2px; height: 28px; background: #dcdcde; }

/* bookings list */
.filter { flex: none; padding: 27px 26px 37px; }
.list { flex: 1; min-height: 0; padding: 55px 31px 55px 32px; background: #f2f1f7; }
.booking { display: flex; align-items: center; padding: 23px 32px 22px 0; border-bottom: 1px solid #e4e4e6; }
.booking:last-child { border-bottom: 0; }
.who { display: flex; flex-direction: column; flex: 1; min-width: 0; padding: 4px 0; }
.who b { font-size: 26px; font-weight: 600; color: #000; }
.place { font-size: 23px; white-space: nowrap; }
.redacted { width: 264px; height: 56px; margin: 4px 0 0 -3px; background: #242424; }
.redacted-long { width: 327px; }
.when { line-height: 36px; text-align: center; color: #8a8a8e; white-space: nowrap; }
.mark { width: 28px; height: 28px; margin: 0 18px 0 16px; }
.chevron { width: 12px; height: 22px; }

/* event details */
.map { display: block; flex: none; width: 100%; aspect-ratio: 2082 / 2084; }
.map text { font-family: Inter, "Liberation Sans", sans-serif; paint-order: stroke; stroke: #fff; stroke-opacity: .8; stroke-width: 9px; stroke-linejoin: round; }
.street text { font-size: 41px; font-weight: 500; fill: #85889a; }
.map .street-main text { font-size: 44px; font-weight: 700; fill: #3e4568; }
.tunnel { font-size: 52px; font-weight: 600; fill: #8b877c; }
.map .tunnel { stroke: #e3dfd2; }
.area text { font-size: 78px; font-weight: 600; fill: #606164; }
.area .area-large { font-size: 84px; }
.area .area-small { font-size: 64px; }
.place-small { font-size: 50px; font-weight: 600; fill: #606164; }
.sight text { font-size: 41px; font-weight: 600; fill: #858171; }
.poi text { font-size: 50px; font-weight: 600; }
.map .shield { font-size: 44px; font-weight: 700; fill: #ffcc00; stroke: none; }
.map .credit { font-size: 64px; font-weight: 500; fill: #55565a; stroke: none; }
.map .legal { font-size: 42px; fill: #77787a; stroke: none; }

.event {
  position: relative;
  flex: none;
  margin: 12px 25px 0 26px;
  padding: 28px 26px 14px;
  border-radius: 18px;
  background: #f2f1f7;
  box-shadow: 0 0 20px rgba(0, 0, 0, .25);
  text-shadow: 0 6px 18px rgba(0, 0, 0, .2);
}
.event h2 { margin-bottom: 12px; font-size: 32px; line-height: 36px; font-weight: 700; color: #000; }
.contact { display: flex; align-items: center; gap: 16px; height: 52px; color: #007aff; }
.contact-icon { width: 26px; height: 30px; overflow: visible; }
.event hr { margin: 9px 0 11px; border: 0; border-top: 1px solid #d4d4d8; }
.event p { font-size: 23px; line-height: 47px; color: #8a8a8e; }
.actions { display: flex; gap: 18px; margin: 13px 25px auto 26px; }
.actions button { flex: 1; height: 82px; border-radius: 14px; color: #fff; }
.accept { background: #35c759; }
.deny { background: #ff3b30; }

/* tab bar */
.tabbar { display: flex; flex: none; flex-direction: column; align-items: center; justify-content: space-between; height: 131px; padding: 9px 0 12px; border-top: 1px solid #d8d8dc; background: #fafafc; }
.tabbar-tinted { background: #f8f9fa; }
.tabbar-plain { background: #f8f8f8; }
.tabs { display: grid; grid-template-columns: repeat(3, 1fr); width: 100%; }
.tabs a { display: flex; flex-direction: column; align-items: center; gap: 6px; font-size: 15px; line-height: 20px; font-weight: 500; color: #98989c; }
.tabs .on { color: #007aff; }
.icon { width: 40px; height: 40px; }
.icon-wide { width: 44px; }
.home { width: 248px; height: 8px; border-radius: 4px; background: #000; }
.home-soft { background: #666; }
```
